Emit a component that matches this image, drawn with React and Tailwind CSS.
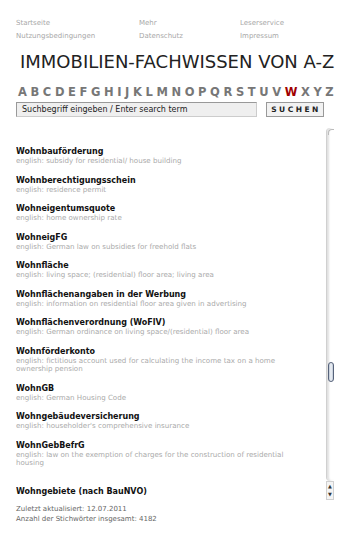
import React from "react";

const navLinks = [
  ["Startseite", "Mehr", "Leserservice"],
  ["Nutzungsbedingungen", "Datenschutz", "Impressum"],
];

const letters = "ABCDEFGHIJKLMNOPQRSTUVWXYZ".split("");

const entries = [
  { term: "Wohnbauförderung", en: "english: subsidy for residential/ house building" },
  { term: "Wohnberechtigungsschein", en: "english: residence permit" },
  { term: "Wohneigentumsquote", en: "english: home ownership rate" },
  { term: "WohneigFG", en: "english: German law on subsidies for freehold flats" },
  { term: "Wohnfläche", en: "english: living space; (residential) floor area; living area" },
  { term: "Wohnflächenangaben in der Werbung", en: "english: information on residential floor area given in advertising" },
  { term: "Wohnflächenverordnung (WoFlV)", en: "english: German ordinance on living space/(residential) floor area" },
  { term: "Wohnförderkonto", en: "english: fictitious account used for calculating the income tax on a home ownership pension" },
  { term: "WohnGB", en: "english: German Housing Code" },
  { term: "Wohngebäudeversicherung", en: "english: householder's comprehensive insurance" },
  { term: "WohnGebBefrG", en: "english: law on the exemption of charges for the construction of residential housing" },
  { term: "Wohngebiete (nach BauNVO)", en: "" },
];

const Scrollbar = () => (
  <div className="w-[8px] flex flex-col shrink-0">
    {/* track */}
    <div className="flex-1 relative bg-white border-l border-[#d0d0d0] shadow-[inset_2px_0_2px_rgba(0,0,0,0.12)] rounded-t-[4px] rounded-b-[4px]">
      <div className="absolute left-[1px] right-0 top-[1px] h-[6px] border-t border-l border-[#bbb] rounded-tl-[4px]" />
      <div className="absolute left-[1px] right-[0px] top-[234px] h-[20px] rounded-[4px] border-[1.5px] border-[#56627a] bg-gradient-to-r from-[#bcc6d4] via-[#f3f6fa] to-[#bcc6d4]" />
    </div>
    <div className="h-[19px] border border-[#d0d0d0] bg-[#f4f4f4] flex flex-col items-center justify-around text-[5px] leading-none text-[#333]">
      <span>▲</span>
      <span>▼</span>
    </div>
  </div>
);

export default function App() {
  return (
    <div className="w-[354px] h-[546px] bg-white pl-4 pr-5 pt-[17px] font-['DejaVu_Sans',Verdana,sans-serif] overflow-hidden">
      {/* Top navigation */}
      <div className="text-[7px] leading-[13px] text-[#a8a8a8]">
        {navLinks.map((row, i) => (
          <div key={i} className="flex">
            <span className="w-[123px]">{row[0]}</span>
            <span className="w-[101px]">{row[1]}</span>
            <span>{row[2]}</span>
          </div>
        ))}
      </div>

      {/* Title */}
      <h1 className="mt-[7px] pl-1 text-[18px] leading-[24px] text-[#222] whitespace-nowrap">
        IMMOBILIEN-FACHWISSEN VON A-Z
      </h1>

      {/* Alphabet */}
      <div className="mt-[11px] flex justify-between pl-[2px] text-[11.5px] leading-[14px] font-bold text-[#777]">
        {letters.map((l) => (
          <span key={l} className={l === "W" ? "text-[#a00000]" : ""}>
            {l}
          </span>
        ))}
      </div>

      {/* Search */}
      <div className="mt-[3px] flex gap-[9px] h-[15px]">
        <div className="w-[241px] border border-[#999] border-b-[#ccc] border-r-[#ccc] bg-[#efefef] text-[8px] text-[#222] flex items-center px-[5px] whitespace-nowrap">
          Suchbegriff eingeben / Enter search term
        </div>
        <div className="w-[58px] border border-[#999] bg-[#f2f2f2] flex items-center justify-center text-[7.5px] font-bold tracking-[2.5px] pl-[2px] text-[#222]">
          SUCHEN
        </div>
      </div>

      {/* List */}
      <div className="mt-[11px] flex h-[372px]">
        <div className="flex-1 pt-[19px] flex flex-col gap-[10px] overflow-hidden">
          {entries.map((e, i) => (
            <div key={e.term} className={i === entries.length - 1 ? "mt-[9px]" : ""}>
              <div className="text-[8px] leading-[10px] font-bold text-[#111]">{e.term}</div>
              {e.en && (
                <div className="w-[272px] text-[7.1px] leading-[8.5px] text-[#aaa]">{e.en}</div>
              )}
            </div>
          ))}
        </div>
        <Scrollbar />
      </div>

      {/* Footer */}
      <div className="mt-[4px] text-[7px] leading-[10px] text-[#666]">
        <div>Zuletzt aktualisiert: 12.07.2011</div>
        <div>Anzahl der Stichwörter insgesamt: 4182</div>
      </div>
    </div>
  );
}
